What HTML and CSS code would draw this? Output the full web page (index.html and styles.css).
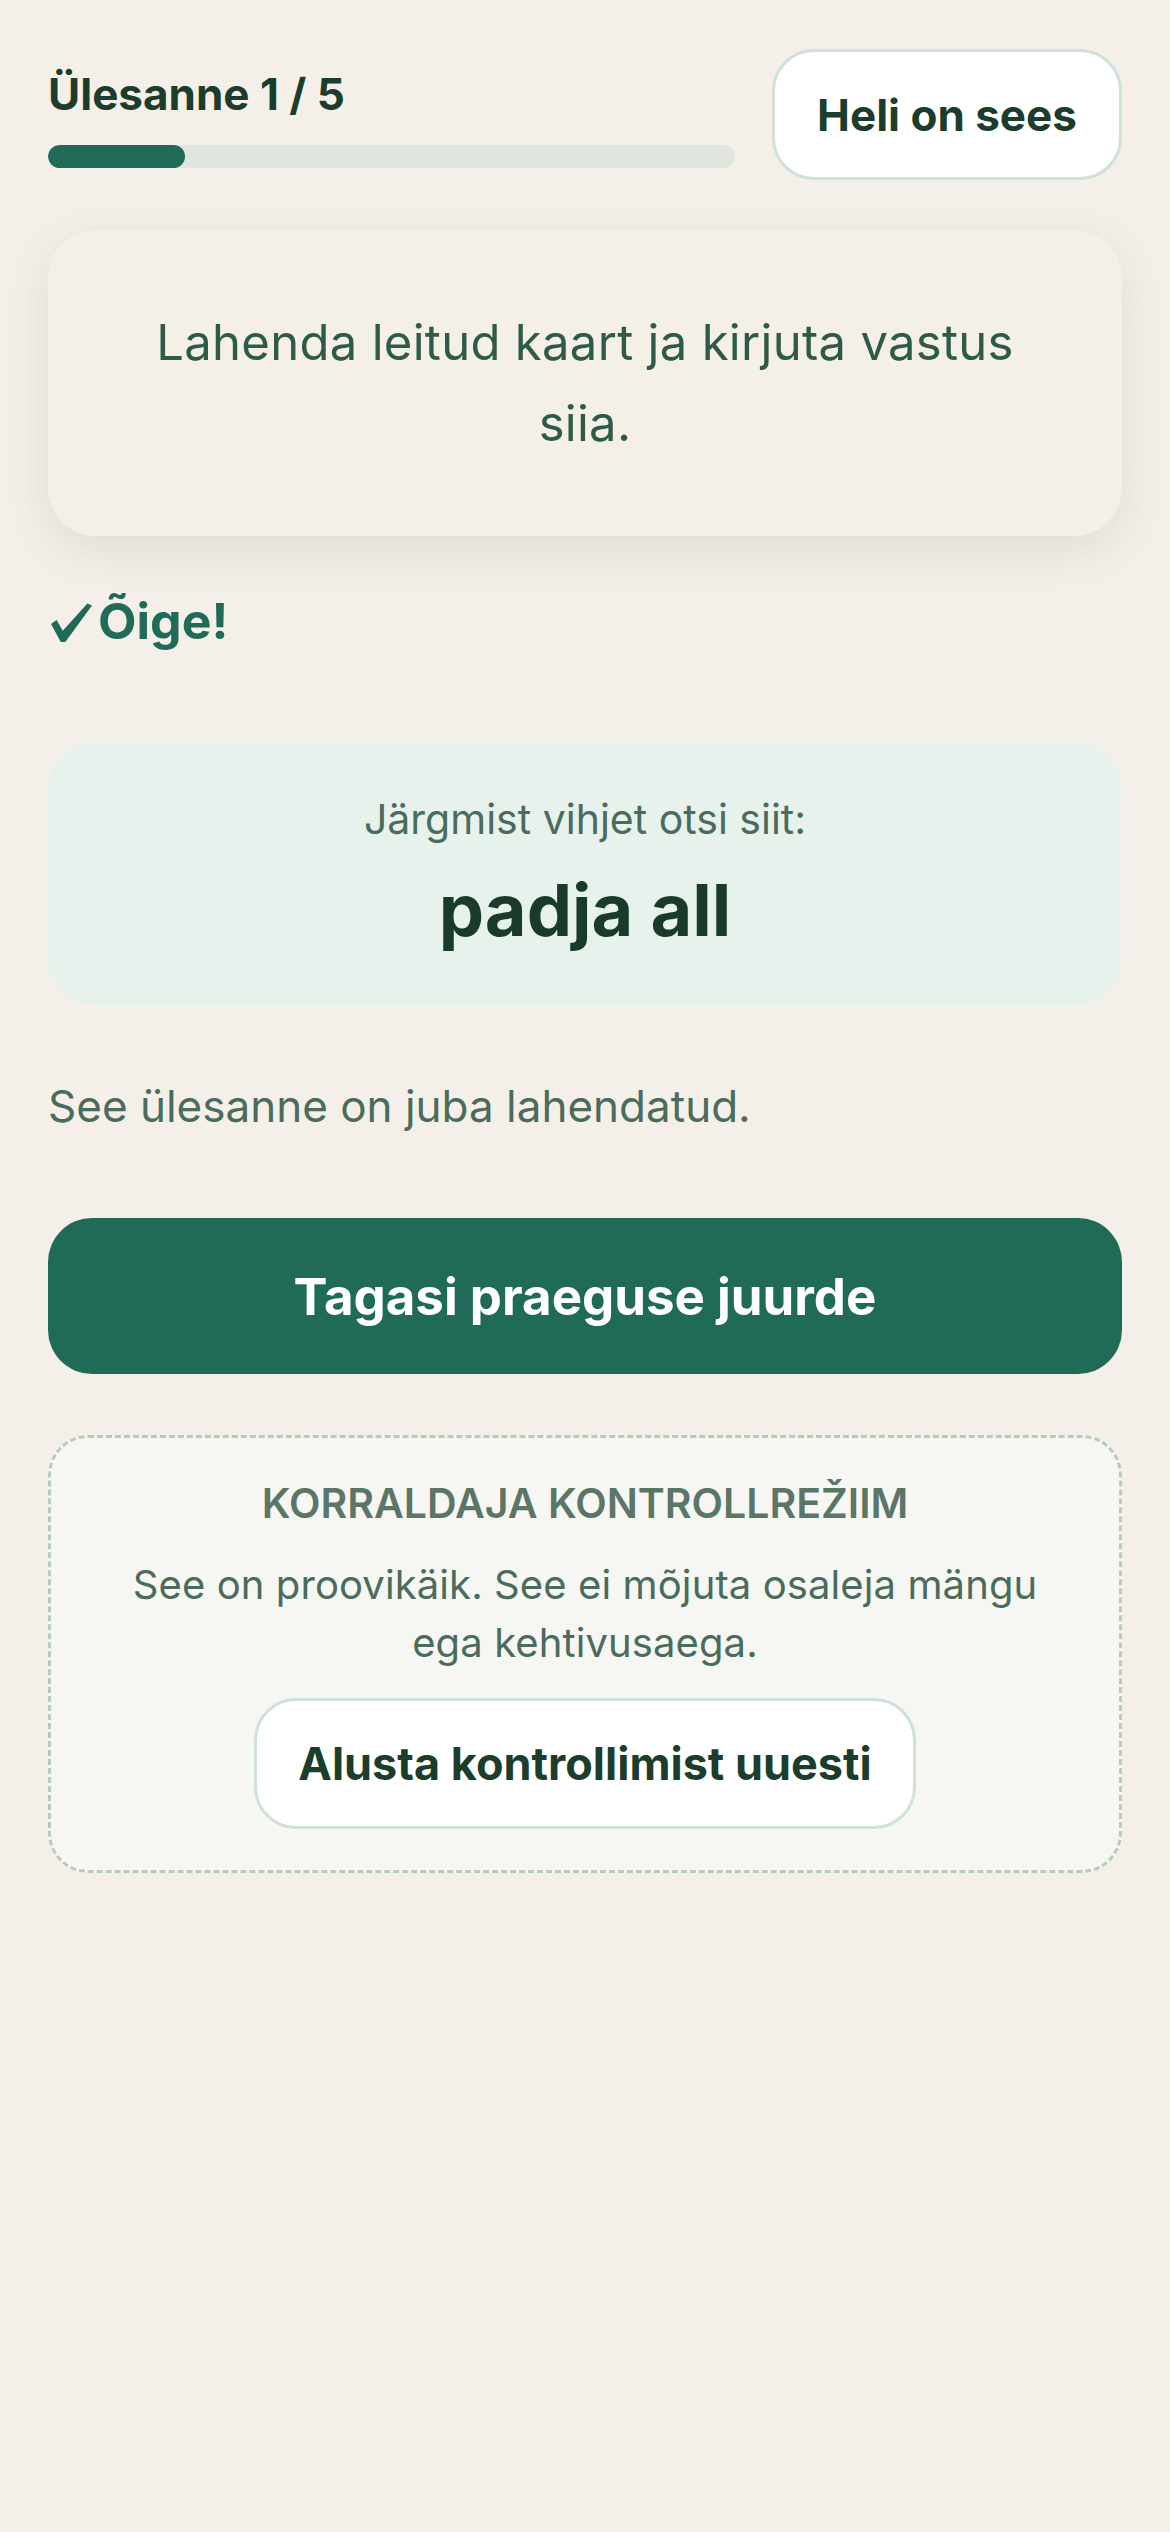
FILE: index.html
```html
<!DOCTYPE html>
<html lang="et">
<head>
<meta charset="utf-8">
<title>Ülesanne 1 / 5</title>
<link rel="stylesheet" href="styles.css">
</head>
<body>
<main class="page">
  <header class="top">
    <div class="progress-info">
      <div class="step">Ülesanne 1 / 5</div>
      <div class="track"><div class="fill" style="width:20%"></div></div>
    </div>
    <button class="sound-btn">Heli on sees</button>
  </header>

  <section class="task-card">
    <p>Lahenda leitud kaart ja kirjuta vastus siia.</p>
  </section>

  <div class="result">
    <svg class="check" viewBox="0 0 40 38" aria-hidden="true"><path d="M0 20.5 L5.5 16.5 L11.5 27 L35.5 0.5 L40 2.5 L14 38 L9.5 38 Z"/></svg>
    <span>Õige!</span>
  </div>

  <section class="hint">
    <div class="hint-label">Järgmist vihjet otsi siit:</div>
    <div class="hint-value">padja all</div>
  </section>

  <p class="solved">See ülesanne on juba lahendatud.</p>

  <button class="primary-btn">Tagasi praeguse juurde</button>

  <section class="control">
    <div class="control-title">KORRALDAJA KONTROLLREŽIIM</div>
    <p class="control-text">See on proovikäik. See ei mõjuta osaleja mängu ega kehtivusaega.</p>
    <button class="secondary-btn">Alusta kontrollimist uuesti</button>
  </section>
</main>
</body>
</html>
```

FILE: styles.css
```css
* { box-sizing: border-box; }

html, body {
  margin: 0;
  padding: 0;
  background: #f4f0e9;
}

body {
  font-family: Inter, "Noto Sans", "DejaVu Sans", sans-serif;
  color: #1c3d2c;
}

.page {
  padding: 49px 48px 48px;
  display: flex;
  flex-direction: column;
}

.top {
  display: flex;
  align-items: center;
  gap: 37px;
}

.progress-info {
  flex: 1;
  display: flex;
  flex-direction: column;
  gap: 24px;
  margin-top: 6px;
}

.step {
  font-size: 44px;
  line-height: 53px;
  font-weight: 700;
  letter-spacing: 0;
  color: #1c3d2c;
}

.track {
  height: 23px;
  border-radius: 12px;
  background: #e0e5de;
  overflow: hidden;
}

.fill {
  height: 100%;
  border-radius: 12px;
  background: #206b57;
}

.sound-btn {
  width: 350px;
  height: 131px;
  border: 3px solid #d0e2d8;
  border-radius: 42px;
  background: #ffffff;
  font-family: inherit;
  font-size: 44px;
  font-weight: 700;
  letter-spacing: 0;
  color: #1c3d2c;
  padding: 0;
}

.task-card {
  margin-top: 50px;
  background: #f4f0e8;
  border-radius: 48px;
  box-shadow: 0 14px 48px rgba(70, 60, 30, 0.11);
  padding: 72px 90px;
  text-align: center;
}

.task-card p {
  margin: 0;
  font-size: 49px;
  line-height: 81px;
  font-weight: 400;
  letter-spacing: 0.3px;
  color: #2f5a4a;
}

.result {
  margin-top: 55px;
  font-size: 50px;
  line-height: 60px;
  font-weight: 700;
  color: #206b57;
  display: flex;
  align-items: flex-end;
  gap: 6px;
}

.check {
  width: 41px;
  height: 39px;
  margin-left: 3px;
  margin-bottom: 9px;
  fill: #206b57;
}

.hint {
  margin-top: 91px;
  background: #e8f2ec;
  border-radius: 46px;
  padding: 49px 32px 53px;
  text-align: center;
  display: flex;
  flex-direction: column;
  gap: 21px;
}

.hint-label {
  font-size: 41px;
  line-height: 56px;
  font-weight: 400;
  color: #4b6b5c;
}

.hint-value {
  font-size: 72px;
  line-height: 84px;
  font-weight: 700;
  color: #1a3a2c;
}

.solved {
  margin: 70px 0 0;
  font-size: 44px;
  line-height: 63px;
  font-weight: 400;
  color: #4b6b5c;
}

.primary-btn {
  margin-top: 80px;
  height: 156px;
  width: 100%;
  border: none;
  border-radius: 44px;
  background: #206b57;
  color: #ffffff;
  font-family: inherit;
  font-size: 51px;
  font-weight: 700;
  padding: 0;
}

.control {
  margin-top: 61px;
  background: #f6f7f3;
  border: 3px dashed #b9cbbf;
  border-radius: 40px;
  padding: 36px 70px 41px;
  display: flex;
  flex-direction: column;
  align-items: center;
  text-align: center;
}

.control-title {
  font-size: 41px;
  line-height: 59px;
  font-weight: 600;
  color: #5b7667;
}

.control-text {
  margin: 23px 0 0;
  font-size: 40px;
  line-height: 58px;
  font-weight: 400;
  letter-spacing: 0.1px;
  color: #4b6b5c;
}

.secondary-btn {
  margin-top: 26px;
  height: 131px;
  padding: 0 41px;
  border: 3px solid #d0e2d8;
  border-radius: 42px;
  background: #ffffff;
  font-family: inherit;
  font-size: 45px;
  font-weight: 700;
  color: #1c3d2c;
}
```
